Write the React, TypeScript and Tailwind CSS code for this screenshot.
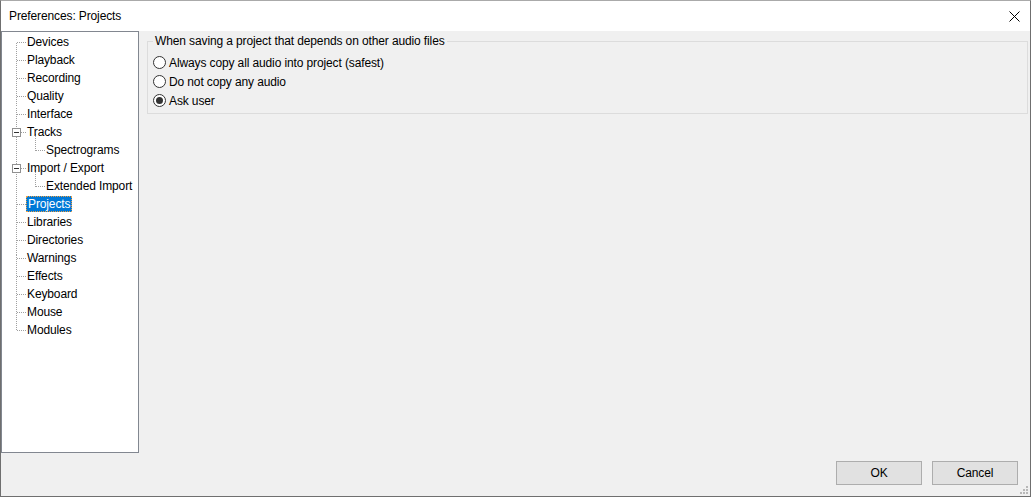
import React from "react";

type Item = { label: string; level: number; expander?: boolean; selected?: boolean };

const items: Item[] = [
  { label: "Devices", level: 0 },
  { label: "Playback", level: 0 },
  { label: "Recording", level: 0 },
  { label: "Quality", level: 0 },
  { label: "Interface", level: 0 },
  { label: "Tracks", level: 0, expander: true },
  { label: "Spectrograms", level: 1 },
  { label: "Import / Export", level: 0, expander: true },
  { label: "Extended Import", level: 1 },
  { label: "Projects", level: 0, selected: true },
  { label: "Libraries", level: 0 },
  { label: "Directories", level: 0 },
  { label: "Warnings", level: 0 },
  { label: "Effects", level: 0 },
  { label: "Keyboard", level: 0 },
  { label: "Mouse", level: 0 },
  { label: "Modules", level: 0 },
];

const ROW = 18;
const TOP = 1;

function TreeLines() {
  const cy = (i: number) => TOP + i * ROW + 9.5;
  const lines: React.ReactNode[] = [];
  const dash = { stroke: "#a0a0a0", strokeWidth: 1, strokeDasharray: "1 1", shapeRendering: "crispEdges" as const };
  lines.push(<line key="v" x1={14.5} y1={cy(0)} x2={14.5} y2={cy(16)} {...dash} />);
  items.forEach((it, i) => {
    const y = Math.floor(cy(i)) + 0.5;
    if (it.level === 0) {
      lines.push(<line key={"h" + i} x1={it.expander ? 19 : 15} y1={y} x2={25} y2={y} {...dash} />);
    } else {
      lines.push(<line key={"nv" + i} x1={33.5} y1={cy(i - 1) + 1} x2={33.5} y2={y} {...dash} />);
      lines.push(<line key={"nh" + i} x1={34} y1={y} x2={44} y2={y} {...dash} />);
    }
  });
  items.forEach((it, i) => {
    if (it.expander) {
      const y = Math.floor(cy(i)) - 4;
      lines.push(
        <g key={"b" + i} shapeRendering="crispEdges">
          <rect x={10.5} y={y + 0.5} width={8} height={8} fill="#fff" stroke="#919191" />
          <line x1={12} y1={y + 4.5} x2={17} y2={y + 4.5} stroke="#333" />
        </g>
      );
    }
  });
  return (
    <svg className="absolute left-0 top-0 pointer-events-none" width={137} height={420}>
      {lines}
    </svg>
  );
}

function Radio({ checked, label }: { checked?: boolean; label: string }) {
  return (
    <div className="flex h-[19px] items-center">
      <span className="flex h-[13px] w-[13px] items-center justify-center rounded-full border border-[#333333] bg-white">
        {checked && <span className="h-[7px] w-[7px] rounded-full bg-[#333333]" />}
      </span>
      <span className="ml-[3px]">{label}</span>
    </div>
  );
}

export default function App() {
  return (
    <div
      className="relative flex h-[497px] w-[1031px] flex-col border border-[#6f6f6f] border-t-[#aaaaaa] bg-[#f0f0f0] text-[12px] leading-[16px] tracking-[-0.12px] text-black"
      style={{ fontFamily: "'Liberation Sans', Arial, sans-serif" }}
    >
      {/* title bar */}
      <div className="flex h-[30px] items-center justify-between bg-white pl-[8px] pr-[9px]">
        <span>Preferences: Projects</span>
        <svg width="11" height="11" viewBox="0 0 11 11" className="mr-[1px]">
          <path d="M0.5 0.5 L10.5 10.5 M10.5 0.5 L0.5 10.5" stroke="#000" strokeWidth="1" />
        </svg>
      </div>

      {/* body */}
      <div className="flex h-[422px]">
        <div className="relative h-full w-[138px] border border-[#828790] bg-white">
          <TreeLines />
          <div className="relative pt-[1px]">
            {items.map((it) => (
              <div key={it.label} className="flex h-[18px] items-center" style={{ paddingLeft: it.level === 0 ? 23 : 42 }}>
                {it.selected ? (
                  <span className="ml-[1px] border border-dotted border-[#f0a040] bg-[#0078d7] px-[1px] leading-[14px] text-white">{it.label}</span>
                ) : (
                  <span className="px-[2px]">{it.label}</span>
                )}
              </div>
            ))}
          </div>
        </div>

        <div className="flex-1 pl-[8px] pr-[2px]">
          <fieldset className="mt-[2px] border border-[#dcdcdc] pb-[3px] pl-[5px]">
            <legend className="px-[2px]">When saving a project that depends on other audio files</legend>
            <div className="pt-[4px]">
              <Radio label="Always copy all audio into project (safest)" />
              <Radio label="Do not copy any audio" />
              <Radio label="Ask user" checked />
            </div>
          </fieldset>
        </div>
      </div>

      {/* buttons */}
      <div className="flex flex-1 justify-end gap-[10px] pr-[12px] pt-[8px]">
        <button className="h-[24px] w-[86px] border border-[#adadad] bg-[#e1e1e1]">OK</button>
        <button className="h-[24px] w-[86px] border border-[#adadad] bg-[#e1e1e1]">Cancel</button>
      </div>

      <svg className="absolute bottom-[1px] right-[1px]" width="10" height="10" viewBox="0 0 10 10" shapeRendering="crispEdges">
        {[
          [7, 1],
          [4, 4],
          [7, 4],
          [1, 7],
          [4, 7],
          [7, 7],
        ].map(([x, y]) => (
          <rect key={`${x}-${y}`} x={x} y={y} width={2} height={2} fill="#b8b8b8" />
        ))}
      </svg>
    </div>
  );
}
